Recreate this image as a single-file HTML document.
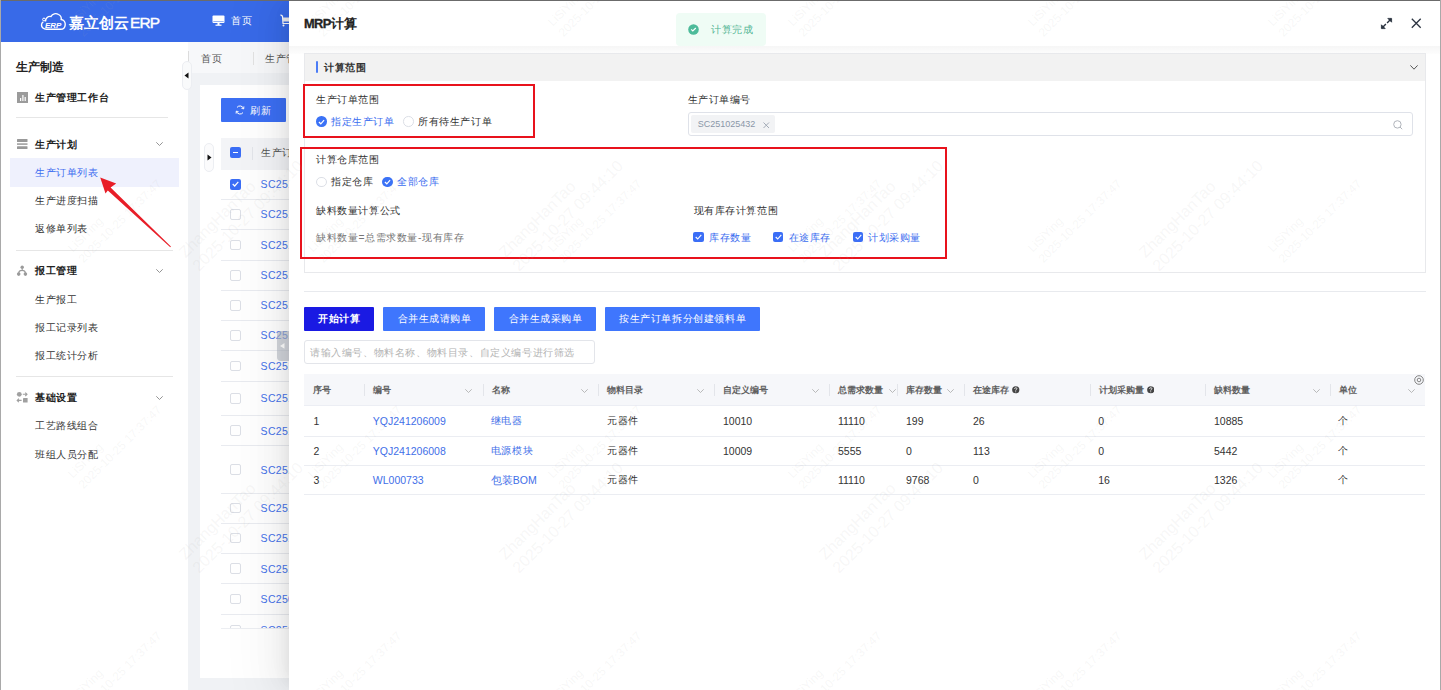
<!DOCTYPE html>
<html><head><meta charset="utf-8">
<style>
*{margin:0;padding:0;box-sizing:border-box}
html,body{width:1441px;height:690px;overflow:hidden;background:#fff}
body{position:relative;font-family:"Liberation Sans",sans-serif;color:#333;font-size:10.5px}
.a{position:absolute}
.t{position:absolute;white-space:nowrap;line-height:1;font-weight:500}
.b{font-weight:bold}
.sm{font-size:10.5px;color:#333}
.blue{color:#3b6def}
.chev{position:absolute;width:7px;height:4px}
.hline{position:absolute;height:1px;background:#e5e7eb}
.cbx{position:absolute;width:10.5px;height:10.5px;border:1px solid #dcdfe6;border-radius:2px;background:#fff}
.cbc{position:absolute;width:10.5px;height:10.5px;border-radius:2px;background:#3b6ef6}
.rdo{position:absolute;width:10.5px;height:10.5px;border:1px solid #dcdfe6;border-radius:50%;background:#fff}
.rdc{position:absolute;width:10.5px;height:10.5px;border-radius:50%;background:#3b72f6}
</style></head><body>
<!-- frame -->
<div class="a" style="left:0;top:0;width:1441px;height:1px;background:#6b6b6b;z-index:50"></div>
<div class="a" style="left:0;top:0;width:1px;height:690px;background:#a9a9a9;z-index:50"></div>
<div class="a" style="left:1440px;top:0;width:1px;height:690px;background:#a9a9a9;z-index:50"></div>

<!-- ============ HEADER ============ -->
<div class="a" style="left:1px;top:1px;width:290px;height:40.6px;background:#386ae8"></div>
<svg class="a" style="left:40px;top:12px" width="27" height="19" viewBox="0 0 27 19">
 <path d="M5.5 9.5 C5.5 6 8 4 11 4.5 C12.5 1.5 16 1 18.5 2.5 C21 3.8 21.5 6 21.2 7.5 C24 8 25.5 10.5 25.2 13 C25 15.5 23 17.3 20.5 17.3 L6.5 17.3 C3.5 17.3 1.5 15.3 1.5 13 C1.5 11.5 2.3 10.3 3.3 9.8" fill="none" stroke="#fff" stroke-width="1.4"/>
 <circle cx="4" cy="7.5" r="1.4" fill="none" stroke="#fff" stroke-width="1"/>
 <text x="5" y="16" font-family="Liberation Sans" font-weight="bold" font-style="italic" font-size="8" fill="#fff">ERP</text>
</svg>
<div class="t" style="left:69px;top:14.5px;font-size:14.6px;color:#fff;font-weight:bold">嘉立创云<span style="font-size:15.5px;letter-spacing:-0.9px;margin-left:1px;font-weight:normal;-webkit-text-stroke:0.4px #fff">ERP</span></div>
<svg class="a" style="left:212px;top:15px" width="13" height="11" viewBox="0 0 13 11">
 <rect x="0.5" y="0.5" width="12" height="7.5" rx="1" fill="#fff"/><rect x="1.3" y="6.2" width="10.4" height="0.8" fill="#7d9ff0"/>
 <rect x="5.5" y="8" width="2" height="2" fill="#fff"/><rect x="3.5" y="9.6" width="6" height="1.2" fill="#fff"/>
</svg>
<div class="t" style="left:231px;top:15.5px;font-size:10.3px;letter-spacing:0.6px;color:#fff">首页</div>
<svg class="a" style="left:280px;top:14px" width="10" height="13" viewBox="0 0 10 13">
 <path d="M0.5 0.8 L2.5 2.2 L3 9.5 L10 9.5" fill="none" stroke="#fff" stroke-width="1.2"/>
 <rect x="3" y="3.5" width="7" height="4" fill="#eee"/>
 <circle cx="3.5" cy="11.5" r="1" fill="#fff"/>
</svg>

<!-- ============ SIDEBAR ============ -->
<div class="t b" style="left:15.5px;top:60.5px;font-size:12px;color:#222">生产制造</div>
<svg class="a" style="left:16.5px;top:92px" width="11.5" height="11" viewBox="0 0 11.5 11">
 <rect x="0" y="0" width="11.5" height="11" fill="#9b9b9b"/>
 <rect x="3" y="6" width="1.2" height="3" fill="#fff"/><rect x="5.3" y="3" width="1.2" height="6" fill="#fff"/><rect x="7.6" y="5" width="1.2" height="4" fill="#fff"/>
</svg>
<div class="t b" style="left:35px;top:92.7px;font-size:10.3px;letter-spacing:0.6px;color:#222">生产管理工作台</div>
<div class="hline" style="left:15.5px;top:117px;width:152px;background:#e6e6e6"></div>

<svg class="a" style="left:17px;top:138.8px" width="10.5" height="10.5" viewBox="0 0 10.5 10.5">
 <rect x="0" y="0.1" width="10.5" height="2.9" rx="0.5" fill="#999"/><rect x="0" y="4.2" width="10.5" height="1.8" fill="#aaa"/><rect x="0" y="7.2" width="10.5" height="2.9" rx="0.5" fill="#999"/>
</svg>
<div class="t b" style="left:35px;top:139.7px;font-size:10.3px;letter-spacing:0.6px;color:#222">生产计划</div>
<svg class="chev" style="left:156px;top:142px" viewBox="0 0 7 4"><path d="M0.3 0.3 L3.5 3.5 L6.7 0.3" fill="none" stroke="#888" stroke-width="0.9"/></svg>
<div class="a" style="left:10px;top:158.3px;width:169px;height:28.5px;background:#eff1fd"></div>
<div class="t" style="left:35px;top:167.7px;font-size:10.3px;letter-spacing:0.6px;color:#3d6cf0">生产订单列表</div>
<div class="t" style="left:35px;top:196.2px;font-size:10.3px;letter-spacing:0.6px;color:#333">生产进度扫描</div>
<div class="t" style="left:35px;top:224.2px;font-size:10.3px;letter-spacing:0.6px;color:#333">返修单列表</div>
<div class="hline" style="left:15.5px;top:249.5px;width:157px;background:#e6e6e6"></div>

<svg class="a" style="left:16px;top:264px" width="12" height="12" viewBox="0 0 12 12">
 <circle cx="6.2" cy="3.3" r="1.7" fill="#9a9a9a"/><circle cx="2.7" cy="10.1" r="1.8" fill="#9a9a9a"/><circle cx="9.4" cy="10.1" r="1.8" fill="#9a9a9a"/>
 <path d="M6.2 4.5 L6.2 6.4 M2.7 9 Q2.9 6.4 6 6.4 Q9.2 6.4 9.4 9" fill="none" stroke="#9a9a9a" stroke-width="1.1"/>
</svg>
<div class="t b" style="left:35px;top:265.7px;font-size:10.3px;letter-spacing:0.6px;color:#222">报工管理</div>
<svg class="chev" style="left:156px;top:268.5px" viewBox="0 0 7 4"><path d="M0.3 0.3 L3.5 3.5 L6.7 0.3" fill="none" stroke="#888" stroke-width="0.9"/></svg>
<div class="t" style="left:35px;top:294.7px;font-size:10.3px;letter-spacing:0.6px;color:#333">生产报工</div>
<div class="t" style="left:35px;top:322.7px;font-size:10.3px;letter-spacing:0.6px;color:#333">报工记录列表</div>
<div class="t" style="left:35px;top:351.2px;font-size:10.3px;letter-spacing:0.6px;color:#333">报工统计分析</div>
<div class="hline" style="left:15.5px;top:376px;width:157px;background:#e6e6e6"></div>

<svg class="a" style="left:16px;top:391px" width="12" height="12" viewBox="0 0 12 12">
 <circle cx="3.3" cy="3.3" r="2.4" fill="#a0a0a0"/><path d="M6.8 3.3 L11 3.3 M9.3 1.6 L11 3.3 L9.3 5" fill="none" stroke="#a0a0a0" stroke-width="1.1"/>
 <rect x="7" y="7" width="4.6" height="4.6" rx="0.4" fill="#a0a0a0"/><path d="M5.6 9.4 L1.2 9.4 M2.9 7.7 L1.2 9.4 L2.9 11.1" fill="none" stroke="#a0a0a0" stroke-width="1.1"/>
</svg>
<div class="t b" style="left:35px;top:392.7px;font-size:10.3px;letter-spacing:0.6px;color:#222">基础设置</div>
<svg class="chev" style="left:156px;top:395.5px" viewBox="0 0 7 4"><path d="M0.3 0.3 L3.5 3.5 L6.7 0.3" fill="none" stroke="#888" stroke-width="0.9"/></svg>
<div class="t" style="left:35px;top:421.2px;font-size:10.3px;letter-spacing:0.6px;color:#333">工艺路线组合</div>
<div class="t" style="left:35px;top:449.7px;font-size:10.3px;letter-spacing:0.6px;color:#333">班组人员分配</div>

<!-- red arrow -->
<svg class="a" style="left:0;top:0;z-index:5" width="200" height="260" viewBox="0 0 200 260">
 <path d="M100.2 177.6 L116.2 183.6 L110.6 187.6 L170.9 246.6 L170.3 247.2 L107.8 190.6 L105.5 193.6 Z" fill="#e81e28"/>
</svg>

<!-- ============ MAIN BG ============ -->
<div class="a" style="left:188px;top:41.6px;width:110px;height:649px;background:#f0f2f5"></div>
<div class="a" style="left:188px;top:41.6px;width:110px;height:31px;background:#f7f8fa"></div>
<div class="a" style="left:188px;top:51px;width:1px;height:11px;background:#dcdcdc"></div>
<div class="t" style="left:201px;top:54.0px;font-size:10.3px;letter-spacing:0.6px;color:#555">首页</div>
<div class="a" style="left:252.5px;top:51.5px;width:1px;height:13.5px;background:#e2e2e2"></div>
<div class="t" style="left:265px;top:54.0px;font-size:10.3px;letter-spacing:0.6px;color:#555">生产管</div>
<div class="a" style="left:182px;top:61px;width:9.5px;height:29px;background:#f9fafb;border:1px solid #eceef2;border-radius:5px"></div>
<svg class="a" style="left:184px;top:72px" width="5" height="7" viewBox="0 0 5 7"><path d="M4.5 0.5 L0.5 3.5 L4.5 6.5 Z" fill="#111"/></svg>

<!-- card -->
<div class="a" style="left:200px;top:85px;width:98px;height:593px;background:#fff"></div>
<div class="a" style="left:221px;top:98px;width:65px;height:24px;background:#3c6ff3;border-radius:1px"></div>
<svg class="a" style="left:235px;top:105px" width="10" height="10" viewBox="0 0 10 10"><path d="M8.6 3.6 A3.8 3.8 0 0 0 2 2.4 M1.4 6.4 A3.8 3.8 0 0 0 8 7.6" fill="none" stroke="#fff" stroke-width="1"/><path d="M8.9 1.4 L8.7 3.9 L6.4 3.3 M1.1 8.6 L1.3 6.1 L3.6 6.7" fill="none" stroke="#fff" stroke-width="0.9"/></svg>
<div class="t" style="left:250px;top:105.5px;font-size:10.3px;letter-spacing:0.6px;color:#fff">刷新</div>

<div class="a" style="left:221px;top:137.5px;width:77px;height:32px;background:#f3f4f7"></div>
<div class="a" style="left:204px;top:143px;width:10px;height:29px;background:#fbfbfc;border:1px solid #eceef2;border-radius:5px"></div>
<svg class="a" style="left:207px;top:154px" width="5" height="7" viewBox="0 0 5 7"><path d="M0.5 0.5 L4.5 3.5 L0.5 6.5 Z" fill="#111"/></svg>
<div class="cbc" style="left:230px;top:147px"></div>
<div class="a" style="left:232.5px;top:151.7px;width:5.5px;height:1.2px;background:#fff"></div>
<div class="a" style="left:251.5px;top:147px;width:1px;height:13px;background:#e3e5ea"></div>
<div class="t b" style="left:261px;top:148.3px;font-size:10.3px;letter-spacing:0.6px;color:#555;font-weight:500">生产订单</div>

<div class="a" style="left:221px;top:169.5px;width:77px;height:458.5px;overflow:hidden">
<div class="a" style="left:0;top:29.4px;width:77px;height:1px;background:#e9ebf0"></div>
<div class="cbc" style="left:9px;top:9.7px"></div><svg class="a" style="left:11px;top:11.9px" width="7" height="6" viewBox="0 0 7 6"><path d="M0.7 3 L2.7 5 L6.3 0.8" fill="none" stroke="#fff" stroke-width="1.2"/></svg>
<div class="t" style="left:39.6px;top:9.9px;font-size:10.5px;letter-spacing:0.3px;color:#4672ea">SC2510254</div>
<div class="a" style="left:0;top:59.3px;width:77px;height:1px;background:#e9ebf0"></div>
<div class="cbx" style="left:9px;top:39.6px"></div>
<div class="t" style="left:39.6px;top:39.9px;font-size:10.5px;letter-spacing:0.3px;color:#4672ea">SC2510253</div>
<div class="a" style="left:0;top:90.3px;width:77px;height:1px;background:#e9ebf0"></div>
<div class="cbx" style="left:9px;top:70.1px"></div>
<div class="t" style="left:39.6px;top:70.3px;font-size:10.5px;letter-spacing:0.3px;color:#4672ea">SC2510252</div>
<div class="a" style="left:0;top:120.4px;width:77px;height:1px;background:#e9ebf0"></div>
<div class="cbx" style="left:9px;top:100.6px"></div>
<div class="t" style="left:39.6px;top:100.9px;font-size:10.5px;letter-spacing:0.3px;color:#4672ea">SC2510251</div>
<div class="a" style="left:0;top:150.3px;width:77px;height:1px;background:#e9ebf0"></div>
<div class="cbx" style="left:9px;top:130.6px"></div>
<div class="t" style="left:39.6px;top:130.9px;font-size:10.5px;letter-spacing:0.3px;color:#4672ea">SC2510250</div>
<div class="a" style="left:0;top:180.4px;width:77px;height:1px;background:#e9ebf0"></div>
<div class="cbx" style="left:9px;top:160.6px"></div>
<div class="t" style="left:39.6px;top:160.9px;font-size:10.5px;letter-spacing:0.3px;color:#4672ea">SC2510249</div>
<div class="a" style="left:0;top:211.2px;width:77px;height:1px;background:#e9ebf0"></div>
<div class="cbx" style="left:9px;top:191.0px"></div>
<div class="t" style="left:39.6px;top:191.3px;font-size:10.5px;letter-spacing:0.3px;color:#4672ea">SC2510248</div>
<div class="a" style="left:0;top:245.3px;width:77px;height:1px;background:#e9ebf0"></div>
<div class="cbx" style="left:9px;top:223.5px"></div>
<div class="t" style="left:39.6px;top:223.8px;font-size:10.5px;letter-spacing:0.3px;color:#4672ea">SC2510247</div>
<div class="a" style="left:0;top:275.6px;width:77px;height:1px;background:#e9ebf0"></div>
<div class="cbx" style="left:9px;top:255.7px"></div>
<div class="t" style="left:39.6px;top:256.0px;font-size:10.5px;letter-spacing:0.3px;color:#4672ea">SC2510246</div>
<div class="a" style="left:0;top:323.4px;width:77px;height:1px;background:#e9ebf0"></div>
<div class="cbx" style="left:9px;top:294.8px"></div>
<div class="t" style="left:39.6px;top:295.0px;font-size:10.5px;letter-spacing:0.3px;color:#4672ea">SC2510245</div>
<div class="a" style="left:0;top:353.0px;width:77px;height:1px;background:#e9ebf0"></div>
<div class="cbx" style="left:9px;top:333.4px"></div>
<div class="t" style="left:39.6px;top:333.7px;font-size:10.5px;letter-spacing:0.3px;color:#4672ea">SC2510244</div>
<div class="a" style="left:0;top:383.3px;width:77px;height:1px;background:#e9ebf0"></div>
<div class="cbx" style="left:9px;top:363.4px"></div>
<div class="t" style="left:39.6px;top:363.6px;font-size:10.5px;letter-spacing:0.3px;color:#4672ea">SC2510243</div>
<div class="a" style="left:0;top:413.6px;width:77px;height:1px;background:#e9ebf0"></div>
<div class="cbx" style="left:9px;top:393.7px"></div>
<div class="t" style="left:39.6px;top:394.0px;font-size:10.5px;letter-spacing:0.3px;color:#4672ea">SC2510242</div>
<div class="a" style="left:0;top:444.5px;width:77px;height:1px;background:#e9ebf0"></div>
<div class="cbx" style="left:9px;top:424.3px"></div>
<div class="t" style="left:39.6px;top:424.5px;font-size:10.5px;letter-spacing:0.3px;color:#4672ea">SC2509301</div>
<div class="cbx" style="left:9px;top:455px"></div>
<div class="t" style="left:39.6px;top:455.3px;font-size:10.5px;letter-spacing:0.3px;color:#4672ea">SC2509290</div>
</div>
<div class="a" style="left:221px;top:627.5px;width:77px;height:1px;background:#eceef2"></div>

<div class="a" style="left:277px;top:331px;width:14px;height:29.5px;background:rgba(180,185,195,0.6);border-radius:4px 0 0 4px;z-index:3"></div>
<svg class="a" style="left:280px;top:342.8px;z-index:3" width="4.5" height="5.8" viewBox="0 0 4.5 5.8"><path d="M4.5 0 L0 2.9 L4.5 5.8 Z" fill="#fff"/></svg>
<!-- ============ DRAWER ============ -->
<div class="a" style="left:289px;top:1px;width:1152px;height:689px;background:#fff;box-shadow:-6px 0 16px -8px rgba(0,0,0,.10),-9px 0 28px 0 rgba(0,0,0,.06),-12px 0 48px 16px rgba(0,0,0,.035);z-index:10">
</div>
<div id="dw" class="a" style="left:0;top:0;width:1441px;height:690px;z-index:11">
<div class="t b" style="left:304px;top:16.5px;font-size:13.3px;color:#222"><span style="font-size:12.8px;letter-spacing:-0.6px;-webkit-text-stroke:0.35px #222">MRP</span>计算</div>
<!-- toast -->
<div class="a" style="left:676px;top:13px;width:90px;height:32.5px;background:#effcf5;border-radius:4px"></div>
<svg class="a" style="left:688px;top:24px" width="11" height="11" viewBox="0 0 11 11"><circle cx="5.5" cy="5.5" r="5.3" fill="#4dbb9a"/><path d="M3.2 5.4 L4.8 6.9 L7.8 4" fill="none" stroke="#fff" stroke-width="1.2"/></svg>
<div class="t" style="left:711px;top:25.0px;font-size:10.3px;letter-spacing:0.6px;color:#52b594">计算完成</div>
<!-- header icons -->
<svg class="a" style="left:1380px;top:16.5px" width="13" height="13" viewBox="0 0 13 13">
 <path d="M1.8 11.2 L5.9 7.1 M7.1 5.9 L11.2 1.8" stroke="#2b3340" stroke-width="1.4"/>
 <path d="M7.8 1.4 L11.6 1.4 L11.6 5.2 Z" fill="#2b3340" stroke="#2b3340" stroke-width="0.8"/><path d="M1.4 7.8 L1.4 11.6 L5.2 11.6 Z" fill="#2b3340" stroke="#2b3340" stroke-width="0.8"/>
</svg>
<svg class="a" style="left:1411px;top:18px" width="10.5" height="10.5" viewBox="0 0 10.5 10.5"><path d="M0.8 0.8 L9.7 9.7 M9.7 0.8 L0.8 9.7" stroke="#2b3340" stroke-width="1.3"/></svg>
<!-- header shadow -->
<div class="a" style="left:289px;top:45.5px;width:1151px;height:8px;background:linear-gradient(#f6f6f6,#fdfdfd)"></div>

<!-- section -->
<div class="a" style="left:303.5px;top:52.5px;width:1122px;height:220px;border:1px solid #e8e9ec;background:#fff"></div>
<div class="a" style="left:304.5px;top:53.5px;width:1120px;height:27.5px;background:#f2f2f2"></div>
<div class="a" style="left:316px;top:61px;width:2px;height:12.3px;background:#4b7cf6;border-radius:1px"></div>
<div class="t b" style="left:324px;top:62.5px;font-size:10.3px;letter-spacing:0.6px;color:#333">计算范围</div>
<svg class="chev" style="left:1409.5px;top:65px;width:8px;height:5px" viewBox="0 0 8 5"><path d="M0.4 0.4 L4 4.2 L7.6 0.4" fill="none" stroke="#555" stroke-width="1"/></svg>

<div class="a" style="left:302.6px;top:84.1px;width:232.4px;height:54.2px;border:2.3px solid #e8121c"></div>
<div class="t" style="left:316px;top:94.5px;font-size:10.3px;letter-spacing:0.6px;color:#333">生产订单范围</div>
<div class="rdc" style="left:316px;top:116.2px"></div>
<svg class="a" style="left:318px;top:118.5px" width="7" height="6" viewBox="0 0 7 6"><path d="M0.9 3 L2.8 4.8 L6.1 1.2" fill="none" stroke="#fff" stroke-width="1.2"/></svg>
<div class="t" style="left:331px;top:117.0px;font-size:10.3px;letter-spacing:0.6px;color:#3b6def">指定生产订单</div>
<div class="rdo" style="left:403px;top:116.2px"></div>
<div class="t" style="left:418px;top:117.0px;font-size:10.3px;letter-spacing:0.6px;color:#333">所有待生产订单</div>

<div class="t" style="left:687.5px;top:94.5px;font-size:10.3px;letter-spacing:0.6px;color:#333">生产订单编号</div>
<div class="a" style="left:688px;top:112.2px;width:724.6px;height:24.3px;border:1px solid #dfe2e9;border-radius:3px"></div>
<div class="a" style="left:691px;top:115.4px;width:84px;height:18px;background:#f2f3f5;border-radius:2px"></div>
<div class="t" style="left:697.8px;top:120.3px;font-size:9px;color:#8b97a8">SC251025432</div>
<svg class="a" style="left:763px;top:121.5px" width="6.5" height="6.5" viewBox="0 0 6.5 6.5"><path d="M0.5 0.5 L6 6 M6 0.5 L0.5 6" stroke="#9aa3b0" stroke-width="0.9"/></svg>
<svg class="a" style="left:1393px;top:119.5px" width="10" height="10" viewBox="0 0 10 10"><circle cx="4.4" cy="4.4" r="3.7" fill="none" stroke="#b0b4bb" stroke-width="1"/><path d="M7 7 L9.2 9.2" stroke="#b0b4bb" stroke-width="1"/></svg>

<div class="a" style="left:300.2px;top:146.6px;width:646.6px;height:112.2px;border:2.3px solid #e8121c"></div>
<div class="t" style="left:316px;top:154.5px;font-size:10.3px;letter-spacing:0.6px;color:#333">计算仓库范围</div>
<div class="rdo" style="left:316px;top:176.5px"></div>
<div class="t" style="left:331px;top:177.0px;font-size:10.3px;letter-spacing:0.6px;color:#333">指定仓库</div>
<div class="rdc" style="left:382px;top:176.5px"></div>
<svg class="a" style="left:384px;top:178.8px" width="7" height="6" viewBox="0 0 7 6"><path d="M0.9 3 L2.8 4.8 L6.1 1.2" fill="none" stroke="#fff" stroke-width="1.2"/></svg>
<div class="t" style="left:397px;top:177.0px;font-size:10.3px;letter-spacing:0.6px;color:#3b6def">全部仓库</div>

<div class="t" style="left:316px;top:206.0px;font-size:10.3px;letter-spacing:0.6px;color:#333">缺料数量计算公式</div>
<div class="t" style="left:316px;top:232.5px;font-size:10.3px;letter-spacing:0.6px;color:#777">缺料数量=总需求数量-现有库存</div>
<div class="t" style="left:693.5px;top:206.0px;font-size:10.3px;letter-spacing:0.6px;color:#333">现有库存计算范围</div>
<div class="cbc" style="left:693.3px;top:231.8px"></div>
<svg class="a" style="left:695.3px;top:234.3px" width="7" height="6" viewBox="0 0 7 6"><path d="M0.7 3 L2.7 5 L6.3 0.8" fill="none" stroke="#fff" stroke-width="1.1"/></svg>
<div class="t" style="left:709px;top:232.5px;font-size:10.3px;letter-spacing:0.6px;color:#3b6def">库存数量</div>
<div class="cbc" style="left:772.6px;top:231.8px"></div>
<svg class="a" style="left:774.6px;top:234.3px" width="7" height="6" viewBox="0 0 7 6"><path d="M0.7 3 L2.7 5 L6.3 0.8" fill="none" stroke="#fff" stroke-width="1.1"/></svg>
<div class="t" style="left:788.5px;top:232.5px;font-size:10.3px;letter-spacing:0.6px;color:#3b6def">在途库存</div>
<div class="cbc" style="left:852.6px;top:231.8px"></div>
<svg class="a" style="left:854.6px;top:234.3px" width="7" height="6" viewBox="0 0 7 6"><path d="M0.7 3 L2.7 5 L6.3 0.8" fill="none" stroke="#fff" stroke-width="1.1"/></svg>
<div class="t" style="left:868px;top:232.5px;font-size:10.3px;letter-spacing:0.6px;color:#3b6def">计划采购量</div>

<div class="hline" style="left:303.5px;top:291px;width:1122px;background:#e8eaee"></div>

<!-- buttons -->
<div class="a" style="left:303.6px;top:306.8px;width:70.5px;height:24px;background:#1a1ae3;border-radius:1px"></div>
<div class="t b" style="left:318px;top:314.0px;font-size:10.3px;letter-spacing:0.6px;color:#fff">开始计算</div>
<div class="a" style="left:383px;top:306.8px;width:102px;height:24px;background:#3f76fd;border-radius:1px"></div>
<div class="t" style="left:397.5px;top:314.0px;font-size:10.3px;letter-spacing:0.6px;color:#fff">合并生成请购单</div>
<div class="a" style="left:494px;top:306.8px;width:102px;height:24px;background:#3f76fd;border-radius:1px"></div>
<div class="t" style="left:508.5px;top:314.0px;font-size:10.3px;letter-spacing:0.6px;color:#fff">合并生成采购单</div>
<div class="a" style="left:605px;top:306.8px;width:154.6px;height:24px;background:#3f76fd;border-radius:1px"></div>
<div class="t" style="left:619px;top:314.0px;font-size:10.3px;letter-spacing:0.6px;color:#fff">按生产订单拆分创建领料单</div>

<div class="a" style="left:304px;top:340.2px;width:291.4px;height:24.3px;border:1px solid #e3e5ea;border-radius:3px"></div>
<div class="t" style="left:310px;top:348.0px;font-size:10.3px;letter-spacing:0.6px;color:#b3b3b3">请输入编号、物料名称、物料目录、自定义编号进行筛选</div>

<div class="a" style="left:304px;top:374.2px;width:1121.3px;height:32.3px;background:#f6f7fa;border-bottom:1px solid #eceef4"></div>
<div class="t b" style="left:312.6px;top:386px;font-size:9.3px;color:#606060;font-weight:bold">序号</div>
<div class="t b" style="left:373.3px;top:386px;font-size:9.3px;color:#606060;font-weight:bold">编号</div>
<svg class="chev" style="left:465.3px;top:389.0px;width:7px;height:4px" viewBox="0 0 7 4"><path d="M0.3 0.3 L3.5 3.5 L6.7 0.3" fill="none" stroke="#aaa" stroke-width="0.8"/></svg>
<div class="t b" style="left:491.7px;top:386px;font-size:9.3px;color:#606060;font-weight:bold">名称</div>
<svg class="chev" style="left:581px;top:389.0px;width:7px;height:4px" viewBox="0 0 7 4"><path d="M0.3 0.3 L3.5 3.5 L6.7 0.3" fill="none" stroke="#aaa" stroke-width="0.8"/></svg>
<div class="t b" style="left:607px;top:386px;font-size:9.3px;color:#606060;font-weight:bold">物料目录</div>
<svg class="chev" style="left:697px;top:389.0px;width:7px;height:4px" viewBox="0 0 7 4"><path d="M0.3 0.3 L3.5 3.5 L6.7 0.3" fill="none" stroke="#aaa" stroke-width="0.8"/></svg>
<div class="t b" style="left:723px;top:386px;font-size:9.3px;color:#606060;font-weight:bold">自定义编号</div>
<svg class="chev" style="left:812px;top:389.0px;width:7px;height:4px" viewBox="0 0 7 4"><path d="M0.3 0.3 L3.5 3.5 L6.7 0.3" fill="none" stroke="#aaa" stroke-width="0.8"/></svg>
<div class="t b" style="left:838px;top:386px;font-size:9.3px;color:#606060;font-weight:bold">总需求数量</div>
<svg class="chev" style="left:888.6px;top:389.0px;width:7px;height:4px" viewBox="0 0 7 4"><path d="M0.3 0.3 L3.5 3.5 L6.7 0.3" fill="none" stroke="#aaa" stroke-width="0.8"/></svg>
<div class="t b" style="left:906px;top:386px;font-size:9.3px;color:#606060;font-weight:bold">库存数量</div>
<svg class="chev" style="left:947.3px;top:389.0px;width:7px;height:4px" viewBox="0 0 7 4"><path d="M0.3 0.3 L3.5 3.5 L6.7 0.3" fill="none" stroke="#aaa" stroke-width="0.8"/></svg>
<div class="t b" style="left:973.2px;top:386px;font-size:9.3px;color:#606060;font-weight:bold">在途库存</div>
<div class="t b" style="left:1098.9px;top:386px;font-size:9.3px;color:#606060;font-weight:bold">计划采购量</div>
<div class="t b" style="left:1214px;top:386px;font-size:9.3px;color:#606060;font-weight:bold">缺料数量</div>
<svg class="chev" style="left:1312.9px;top:389.0px;width:7px;height:4px" viewBox="0 0 7 4"><path d="M0.3 0.3 L3.5 3.5 L6.7 0.3" fill="none" stroke="#aaa" stroke-width="0.8"/></svg>
<div class="t b" style="left:1339px;top:386px;font-size:9.3px;color:#606060;font-weight:bold">单位</div>
<svg class="chev" style="left:1408.3px;top:389.0px;width:7px;height:4px" viewBox="0 0 7 4"><path d="M0.3 0.3 L3.5 3.5 L6.7 0.3" fill="none" stroke="#aaa" stroke-width="0.8"/></svg>
<div class="a" style="left:364.2px;top:383.7px;width:1px;height:12.8px;background:#e3e5ea"></div>
<div class="a" style="left:482.6px;top:383.7px;width:1px;height:12.8px;background:#e3e5ea"></div>
<div class="a" style="left:598.3px;top:383.7px;width:1px;height:12.8px;background:#e3e5ea"></div>
<div class="a" style="left:713.7px;top:383.7px;width:1px;height:12.8px;background:#e3e5ea"></div>
<div class="a" style="left:829.3px;top:383.7px;width:1px;height:12.8px;background:#e3e5ea"></div>
<div class="a" style="left:896.8px;top:383.7px;width:1px;height:12.8px;background:#e3e5ea"></div>
<div class="a" style="left:964.3px;top:383.7px;width:1px;height:12.8px;background:#e3e5ea"></div>
<div class="a" style="left:1089.7px;top:383.7px;width:1px;height:12.8px;background:#e3e5ea"></div>
<div class="a" style="left:1204.9px;top:383.7px;width:1px;height:12.8px;background:#e3e5ea"></div>
<div class="a" style="left:1329.9px;top:383.7px;width:1px;height:12.8px;background:#e3e5ea"></div>
<svg class="a" style="left:1012px;top:386.2px" width="7.5" height="7.5" viewBox="0 0 7.5 7.5"><circle cx="3.75" cy="3.75" r="3.6" fill="#444"/><path d="M2.6 2.9 Q2.6 1.7 3.75 1.7 Q4.9 1.7 4.9 2.7 Q4.9 3.4 3.75 3.9 L3.75 4.6" fill="none" stroke="#fff" stroke-width="0.8"/><circle cx="3.75" cy="5.7" r="0.5" fill="#fff"/></svg>
<svg class="a" style="left:1146.5px;top:386.2px" width="7.5" height="7.5" viewBox="0 0 7.5 7.5"><circle cx="3.75" cy="3.75" r="3.6" fill="#444"/><path d="M2.6 2.9 Q2.6 1.7 3.75 1.7 Q4.9 1.7 4.9 2.7 Q4.9 3.4 3.75 3.9 L3.75 4.6" fill="none" stroke="#fff" stroke-width="0.8"/><circle cx="3.75" cy="5.7" r="0.5" fill="#fff"/></svg>
<svg class="a" style="left:1414.4px;top:375.3px" width="10" height="10" viewBox="0 0 10 10"><circle cx="5" cy="5" r="4.3" fill="none" stroke="#777" stroke-width="0.9"/><circle cx="5" cy="5" r="1.8" fill="none" stroke="#777" stroke-width="0.9"/></svg>
<div class="a" style="left:304px;top:435.7px;width:1121.3px;height:1px;background:#ebedf2"></div>
<div class="t" style="left:313.5px;top:416.2px;font-size:10.5px;color:#333">1</div>
<div class="t" style="left:372.8px;top:416.2px;font-size:10.5px;color:#3f6fe8">YQJ241206009</div>
<div class="t" style="left:490.8px;top:416.2px;font-size:10.3px;letter-spacing:0.6px;color:#3f6fe8">继电器</div>
<div class="t" style="left:607px;top:416.2px;font-size:10.3px;letter-spacing:0.6px;color:#333">元器件</div>
<div class="t" style="left:723px;top:416.2px;font-size:10.5px;color:#333">10010</div>
<div class="t" style="left:838px;top:416.2px;font-size:10.5px;color:#333">11110</div>
<div class="t" style="left:906px;top:416.2px;font-size:10.5px;color:#333">199</div>
<div class="t" style="left:973px;top:416.2px;font-size:10.5px;color:#333">26</div>
<div class="t" style="left:1098.2px;top:416.2px;font-size:10.5px;color:#333">0</div>
<div class="t" style="left:1214px;top:416.2px;font-size:10.5px;color:#333">10885</div>
<div class="t" style="left:1338.4px;top:416.2px;font-size:10.3px;letter-spacing:0.6px;color:#333">个</div>
<div class="a" style="left:304px;top:464.9px;width:1121.3px;height:1px;background:#ebedf2"></div>
<div class="t" style="left:313.5px;top:445.6px;font-size:10.5px;color:#333">2</div>
<div class="t" style="left:372.8px;top:445.6px;font-size:10.5px;color:#3f6fe8">YQJ241206008</div>
<div class="t" style="left:490.8px;top:445.6px;font-size:10.3px;letter-spacing:0.6px;color:#3f6fe8">电源模块</div>
<div class="t" style="left:607px;top:445.6px;font-size:10.3px;letter-spacing:0.6px;color:#333">元器件</div>
<div class="t" style="left:723px;top:445.6px;font-size:10.5px;color:#333">10009</div>
<div class="t" style="left:838px;top:445.6px;font-size:10.5px;color:#333">5555</div>
<div class="t" style="left:906px;top:445.6px;font-size:10.5px;color:#333">0</div>
<div class="t" style="left:973px;top:445.6px;font-size:10.5px;color:#333">113</div>
<div class="t" style="left:1098.2px;top:445.6px;font-size:10.5px;color:#333">0</div>
<div class="t" style="left:1214px;top:445.6px;font-size:10.5px;color:#333">5442</div>
<div class="t" style="left:1338.4px;top:445.6px;font-size:10.3px;letter-spacing:0.6px;color:#333">个</div>
<div class="a" style="left:304px;top:494.2px;width:1121.3px;height:1px;background:#ebedf2"></div>
<div class="t" style="left:313.5px;top:474.8px;font-size:10.5px;color:#333">3</div>
<div class="t" style="left:372.8px;top:474.8px;font-size:10.5px;color:#3f6fe8">WL000733</div>
<div class="t" style="left:490.8px;top:474.8px;font-size:10.5px;color:#3f6fe8">包装BOM</div>
<div class="t" style="left:607px;top:474.8px;font-size:10.3px;letter-spacing:0.6px;color:#333">元器件</div>
<div class="t" style="left:723px;top:474.8px;font-size:10.5px;color:#333"></div>
<div class="t" style="left:838px;top:474.8px;font-size:10.5px;color:#333">11110</div>
<div class="t" style="left:906px;top:474.8px;font-size:10.5px;color:#333">9768</div>
<div class="t" style="left:973px;top:474.8px;font-size:10.5px;color:#333">0</div>
<div class="t" style="left:1098.2px;top:474.8px;font-size:10.5px;color:#333">16</div>
<div class="t" style="left:1214px;top:474.8px;font-size:10.5px;color:#333">1326</div>
<div class="t" style="left:1338.4px;top:474.8px;font-size:10.3px;letter-spacing:0.6px;color:#333">个</div>
</div>
<!--WM-->
<div class="a" style="left:0;top:0;width:1441px;height:690px;overflow:hidden;z-index:40;pointer-events:none;color:rgba(170,170,170,0.10)">
<div class="a" style="left:65.0px;top:18.6px;font-size:12px;line-height:14.5px;white-space:nowrap;transform-origin:0 0;transform:rotate(-45deg)">LiSiYing<br>2025-10-25 17:37:47</div>
<div class="a" style="left:305.0px;top:18.6px;font-size:12px;line-height:14.5px;white-space:nowrap;transform-origin:0 0;transform:rotate(-45deg)">LiSiYing<br>2025-10-25 17:37:47</div>
<div class="a" style="left:545.0px;top:18.6px;font-size:12px;line-height:14.5px;white-space:nowrap;transform-origin:0 0;transform:rotate(-45deg)">LiSiYing<br>2025-10-25 17:37:47</div>
<div class="a" style="left:785.0px;top:18.6px;font-size:12px;line-height:14.5px;white-space:nowrap;transform-origin:0 0;transform:rotate(-45deg)">LiSiYing<br>2025-10-25 17:37:47</div>
<div class="a" style="left:1025.0px;top:18.6px;font-size:12px;line-height:14.5px;white-space:nowrap;transform-origin:0 0;transform:rotate(-45deg)">LiSiYing<br>2025-10-25 17:37:47</div>
<div class="a" style="left:1265.0px;top:18.6px;font-size:12px;line-height:14.5px;white-space:nowrap;transform-origin:0 0;transform:rotate(-45deg)">LiSiYing<br>2025-10-25 17:37:47</div>
<div class="a" style="left:65.0px;top:244.6px;font-size:12px;line-height:14.5px;white-space:nowrap;transform-origin:0 0;transform:rotate(-45deg)">LiSiYing<br>2025-10-25 17:37:47</div>
<div class="a" style="left:305.0px;top:244.6px;font-size:12px;line-height:14.5px;white-space:nowrap;transform-origin:0 0;transform:rotate(-45deg)">LiSiYing<br>2025-10-25 17:37:47</div>
<div class="a" style="left:545.0px;top:244.6px;font-size:12px;line-height:14.5px;white-space:nowrap;transform-origin:0 0;transform:rotate(-45deg)">LiSiYing<br>2025-10-25 17:37:47</div>
<div class="a" style="left:785.0px;top:244.6px;font-size:12px;line-height:14.5px;white-space:nowrap;transform-origin:0 0;transform:rotate(-45deg)">LiSiYing<br>2025-10-25 17:37:47</div>
<div class="a" style="left:1025.0px;top:244.6px;font-size:12px;line-height:14.5px;white-space:nowrap;transform-origin:0 0;transform:rotate(-45deg)">LiSiYing<br>2025-10-25 17:37:47</div>
<div class="a" style="left:1265.0px;top:244.6px;font-size:12px;line-height:14.5px;white-space:nowrap;transform-origin:0 0;transform:rotate(-45deg)">LiSiYing<br>2025-10-25 17:37:47</div>
<div class="a" style="left:65.0px;top:470.6px;font-size:12px;line-height:14.5px;white-space:nowrap;transform-origin:0 0;transform:rotate(-45deg)">LiSiYing<br>2025-10-25 17:37:47</div>
<div class="a" style="left:305.0px;top:470.6px;font-size:12px;line-height:14.5px;white-space:nowrap;transform-origin:0 0;transform:rotate(-45deg)">LiSiYing<br>2025-10-25 17:37:47</div>
<div class="a" style="left:545.0px;top:470.6px;font-size:12px;line-height:14.5px;white-space:nowrap;transform-origin:0 0;transform:rotate(-45deg)">LiSiYing<br>2025-10-25 17:37:47</div>
<div class="a" style="left:785.0px;top:470.6px;font-size:12px;line-height:14.5px;white-space:nowrap;transform-origin:0 0;transform:rotate(-45deg)">LiSiYing<br>2025-10-25 17:37:47</div>
<div class="a" style="left:1025.0px;top:470.6px;font-size:12px;line-height:14.5px;white-space:nowrap;transform-origin:0 0;transform:rotate(-45deg)">LiSiYing<br>2025-10-25 17:37:47</div>
<div class="a" style="left:1265.0px;top:470.6px;font-size:12px;line-height:14.5px;white-space:nowrap;transform-origin:0 0;transform:rotate(-45deg)">LiSiYing<br>2025-10-25 17:37:47</div>
<div class="a" style="left:65.0px;top:696.6px;font-size:12px;line-height:14.5px;white-space:nowrap;transform-origin:0 0;transform:rotate(-45deg)">LiSiYing<br>2025-10-25 17:37:47</div>
<div class="a" style="left:305.0px;top:696.6px;font-size:12px;line-height:14.5px;white-space:nowrap;transform-origin:0 0;transform:rotate(-45deg)">LiSiYing<br>2025-10-25 17:37:47</div>
<div class="a" style="left:545.0px;top:696.6px;font-size:12px;line-height:14.5px;white-space:nowrap;transform-origin:0 0;transform:rotate(-45deg)">LiSiYing<br>2025-10-25 17:37:47</div>
<div class="a" style="left:785.0px;top:696.6px;font-size:12px;line-height:14.5px;white-space:nowrap;transform-origin:0 0;transform:rotate(-45deg)">LiSiYing<br>2025-10-25 17:37:47</div>
<div class="a" style="left:1025.0px;top:696.6px;font-size:12px;line-height:14.5px;white-space:nowrap;transform-origin:0 0;transform:rotate(-45deg)">LiSiYing<br>2025-10-25 17:37:47</div>
<div class="a" style="left:1265.0px;top:696.6px;font-size:12px;line-height:14.5px;white-space:nowrap;transform-origin:0 0;transform:rotate(-45deg)">LiSiYing<br>2025-10-25 17:37:47</div>
<div class="a" style="left:-145.2px;top:247.7px;font-size:16px;line-height:19.3px;white-space:nowrap;transform-origin:0 0;transform:rotate(-45deg)">ZhangHanTao<br>2025-10-27 09:44:10</div>
<div class="a" style="left:174.8px;top:247.7px;font-size:16px;line-height:19.3px;white-space:nowrap;transform-origin:0 0;transform:rotate(-45deg)">ZhangHanTao<br>2025-10-27 09:44:10</div>
<div class="a" style="left:494.8px;top:247.7px;font-size:16px;line-height:19.3px;white-space:nowrap;transform-origin:0 0;transform:rotate(-45deg)">ZhangHanTao<br>2025-10-27 09:44:10</div>
<div class="a" style="left:814.8px;top:247.7px;font-size:16px;line-height:19.3px;white-space:nowrap;transform-origin:0 0;transform:rotate(-45deg)">ZhangHanTao<br>2025-10-27 09:44:10</div>
<div class="a" style="left:1134.8px;top:247.7px;font-size:16px;line-height:19.3px;white-space:nowrap;transform-origin:0 0;transform:rotate(-45deg)">ZhangHanTao<br>2025-10-27 09:44:10</div>
<div class="a" style="left:1454.8px;top:247.7px;font-size:16px;line-height:19.3px;white-space:nowrap;transform-origin:0 0;transform:rotate(-45deg)">ZhangHanTao<br>2025-10-27 09:44:10</div>
<div class="a" style="left:-145.2px;top:550.1px;font-size:16px;line-height:19.3px;white-space:nowrap;transform-origin:0 0;transform:rotate(-45deg)">ZhangHanTao<br>2025-10-27 09:44:10</div>
<div class="a" style="left:174.8px;top:550.1px;font-size:16px;line-height:19.3px;white-space:nowrap;transform-origin:0 0;transform:rotate(-45deg)">ZhangHanTao<br>2025-10-27 09:44:10</div>
<div class="a" style="left:494.8px;top:550.1px;font-size:16px;line-height:19.3px;white-space:nowrap;transform-origin:0 0;transform:rotate(-45deg)">ZhangHanTao<br>2025-10-27 09:44:10</div>
<div class="a" style="left:814.8px;top:550.1px;font-size:16px;line-height:19.3px;white-space:nowrap;transform-origin:0 0;transform:rotate(-45deg)">ZhangHanTao<br>2025-10-27 09:44:10</div>
<div class="a" style="left:1134.8px;top:550.1px;font-size:16px;line-height:19.3px;white-space:nowrap;transform-origin:0 0;transform:rotate(-45deg)">ZhangHanTao<br>2025-10-27 09:44:10</div>
<div class="a" style="left:1454.8px;top:550.1px;font-size:16px;line-height:19.3px;white-space:nowrap;transform-origin:0 0;transform:rotate(-45deg)">ZhangHanTao<br>2025-10-27 09:44:10</div>
</div>
</body></html>
